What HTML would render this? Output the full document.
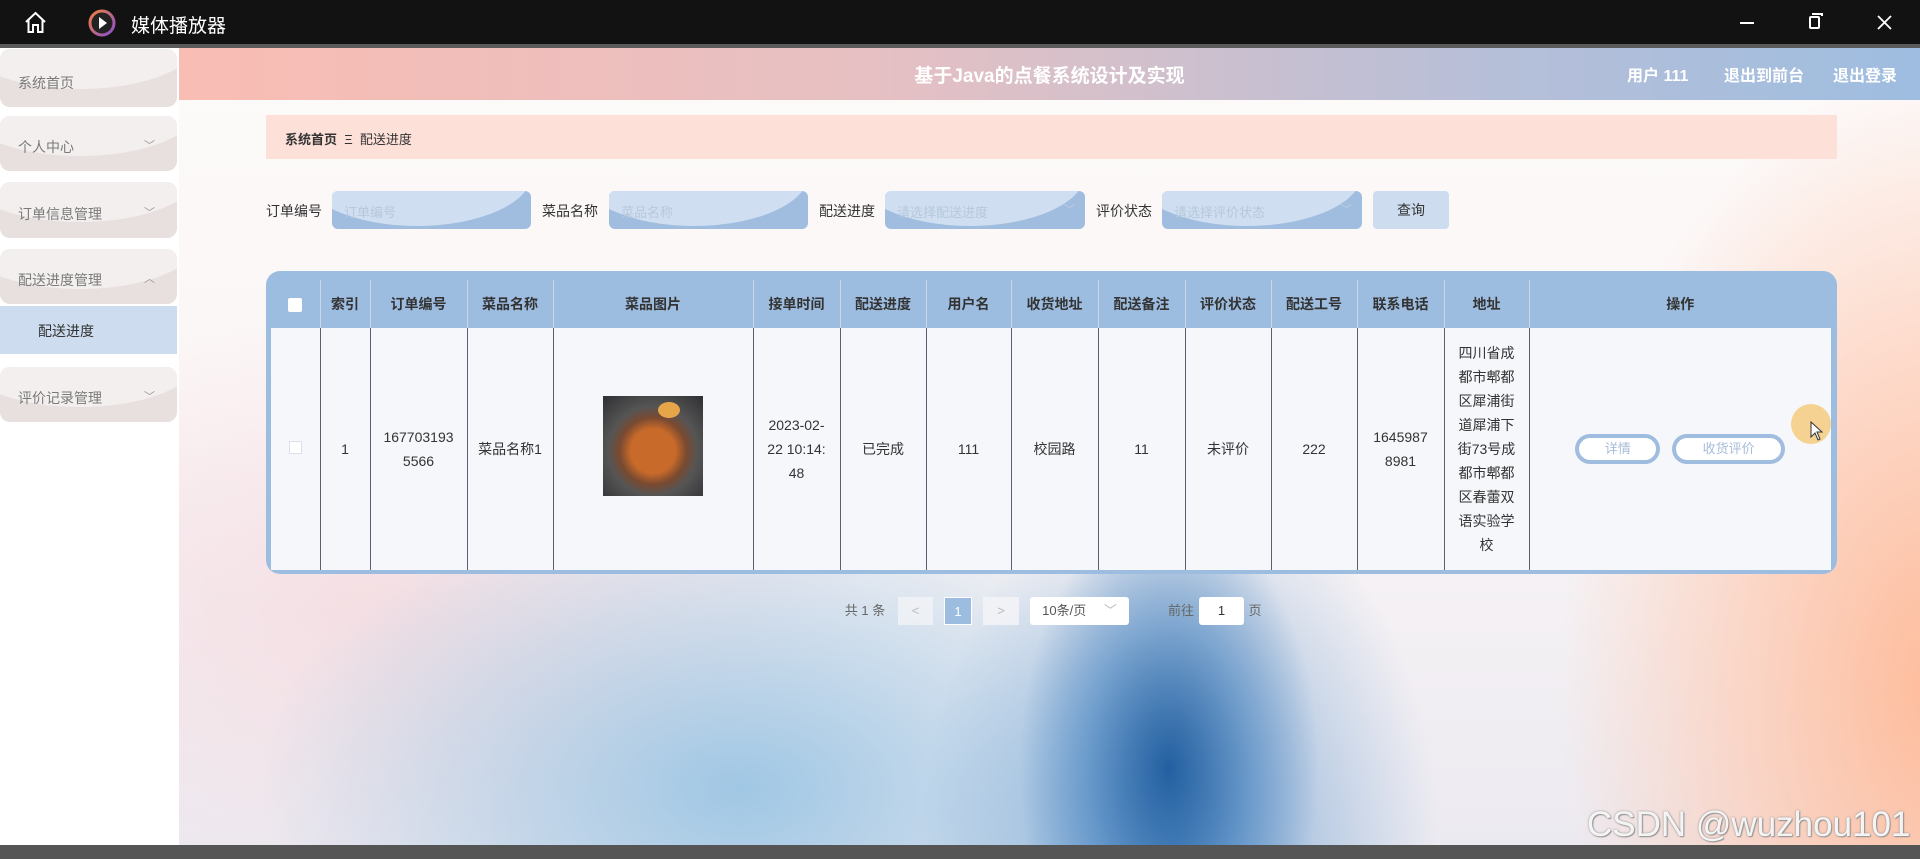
<!DOCTYPE html>
<html><head><meta charset="utf-8">
<style>
*{box-sizing:border-box;margin:0;padding:0}
body{width:1920px;height:859px;overflow:hidden;font-family:"Liberation Sans","Noto Sans CJK SC",sans-serif;background:#fff;position:relative}
.tb{position:absolute;left:0;top:0;width:1920px;height:44px;background:#121212;color:#fff}
.tb .t{position:absolute;left:131px;top:11px;font-size:19px}
.gl{position:absolute;left:0;top:44px;width:1920px;height:4px;background:#5a5a5a}
.side{position:absolute;left:0;top:48px;width:179px;height:797px;background:#fff}
.it{position:absolute;left:0;width:177px;border-radius:10px;background:#e8e0df;overflow:hidden;color:#7a7a7a;font-size:14px}
.it:before{content:"";position:absolute;left:-40px;top:-60px;width:240px;height:100px;border-radius:50%;background:#f3efee}
.it span{position:absolute;left:18px;bottom:14px}
.it i{position:absolute;right:22px;bottom:18px;font-style:normal;font-size:11px;color:#999}
.sub{position:absolute;left:0;top:306px;width:177px;height:48px;background:#cddcef;color:#333;font-size:14px;padding:15px 0 0 38px}
.main{position:absolute;left:179px;top:48px;width:1741px;height:797px;overflow:hidden;
background:
radial-gradient(ellipse 150px 260px at 990px 720px,rgba(15,80,150,.85),rgba(40,110,180,.45) 55%,transparent 100%),
radial-gradient(ellipse 260px 380px at 1000px 800px,rgba(60,130,195,.6),transparent 100%),
radial-gradient(ellipse 480px 300px at 560px 740px,rgba(140,190,225,.8),transparent 100%),
radial-gradient(ellipse 380px 620px at 1760px 640px,rgba(255,185,150,.95),rgba(255,200,175,.6) 55%,transparent 100%),
radial-gradient(ellipse 500px 300px at 200px 560px,rgba(245,215,220,.7),transparent 100%),
linear-gradient(180deg,#fdfafa 0%,#fbf6f6 45%,#eceaf1 100%)}
.hd{position:absolute;left:0;top:0;width:1741px;height:52px;background:linear-gradient(90deg,#f9bdb3,#e6c0c3 40%,#b7bfd8 75%,#9ebde0);color:#fff;font-weight:bold}
.hd .c{position:absolute;left:0;width:1741px;text-align:center;top:13px;font-size:19px}
.hd .r{position:absolute;top:14px;font-size:16px}
.bc{position:absolute;left:87px;top:67px;width:1571px;height:44px;background:#fde0d8;font-size:13px;color:#333;padding:14px 0 0 19px}
.lab{position:absolute;top:153px;font-size:14px;color:#333}
.inp{position:absolute;top:143px;height:38px;border-radius:6px;overflow:hidden;background:#a0bde0;color:#b8c8dc;font-size:13px}
.inp:before{content:"";position:absolute;left:-30px;top:-70px;width:230px;height:105px;border-radius:50%;background:#cfdff1}
.inp span{position:absolute;left:12px;top:11px}
.inp i{position:absolute;right:10px;top:10px;font-style:normal;color:#c0cfe0;font-size:11px}
.btn{position:absolute;left:1194px;top:143px;width:76px;height:38px;border-radius:4px;background:#cddcef;font-size:14px;color:#333;text-align:center;line-height:38px}
.tbl{position:absolute;left:87px;top:223px;width:1571px;height:303px;border-radius:14px;background:#9dbde0;padding:9px 6px 4px 5px}
table{border-collapse:collapse;width:1560px;height:290px;table-layout:fixed;font-size:14px;color:#333;text-align:center}
th{background:#9dbde0;height:48px;font-weight:bold;border-left:1px solid #c8d7ea}
td{background:#f6f7fb;border-left:1px solid #5a6070;line-height:24px;vertical-align:middle}
th:first-child,td:first-child{border-left:none}
.ob{display:inline-block;height:30px;border:4px solid #a0bde0;border-radius:15px;color:#a8bcd8;font-size:13px;line-height:22px;background:#fff}
.pg{position:absolute;top:549px;font-size:13px;color:#666;height:28px;line-height:28px;text-align:center}
.bot{position:absolute;left:0;top:845px;width:1920px;height:14px;background:#555}
.wm{position:absolute;left:1587px;top:805px;font-size:35px;color:rgba(255,255,255,.9);text-shadow:0 0 2px #888,1px 1px 1px #999}
</style></head><body>
<div class="tb">
<svg style="position:absolute;left:24px;top:11px" width="23" height="23" viewBox="0 0 23 23" fill="none" stroke="#fff" stroke-width="2"><path d="M2 11 L11.5 2 L21 11 M4.5 9 V21 H9 V14 H14 V21 H18.5 V9"/></svg>
<svg style="position:absolute;left:88px;top:9px" width="28" height="28" viewBox="0 0 28 28"><defs><linearGradient id="g" x1="0" y1="0" x2="1" y2="1"><stop offset="0" stop-color="#f0803a"/><stop offset="1" stop-color="#8a4fd0"/></linearGradient></defs><circle cx="14" cy="14" r="12" fill="#222" stroke="url(#g)" stroke-width="3"/><path d="M11 8 L19 14 L11 20Z" fill="#fff"/></svg>
<div class="t">媒体播放器</div>
<div style="position:absolute;left:1740px;top:22px;width:14px;height:2px;background:#fff"></div>
<div style="position:absolute;left:1809px;top:16px;width:11px;height:13px;border:2px solid #fff;border-radius:2px"></div>
<div style="position:absolute;left:1812px;top:13px;width:11px;height:3px;border-top:2px solid #fff;border-right:2px solid #fff"></div>
<svg style="position:absolute;left:1877px;top:15px" width="15" height="15" viewBox="0 0 15 15" stroke="#fff" stroke-width="1.8"><path d="M1 1L14 14M14 1L1 14"/></svg>
</div>
<div class="gl"></div>
<div class="side">
<div class="it" style="top:1px;height:58px"><span>系统首页</span></div>
<div class="it" style="top:68px;height:55px"><span>个人中心</span><i>﹀</i></div>
<div class="it" style="top:134px;height:56px"><span>订单信息管理</span><i>﹀</i></div>
<div class="it" style="top:201px;height:55px"><span>配送进度管理</span><i>︿</i></div>
<div class="sub" style="top:258px">配送进度</div>
<div class="it" style="top:319px;height:55px"><span>评价记录管理</span><i>﹀</i></div>
</div>
<div class="main">
<div class="hd"><div class="c">基于Java的点餐系统设计及实现</div>
<div class="r" style="left:1448px">用户 111</div><div class="r" style="left:1545px">退出到前台</div><div class="r" style="left:1654px">退出登录</div></div>
<div class="bc"><b>系统首页</b>&nbsp;&nbsp;Ξ&nbsp;&nbsp;配送进度</div>
<div class="lab" style="left:87px">订单编号</div>
<div class="inp" style="left:153px;width:199px"><span>订单编号</span></div>
<div class="lab" style="left:363px">菜品名称</div>
<div class="inp" style="left:430px;width:199px"><span>菜品名称</span></div>
<div class="lab" style="left:640px">配送进度</div>
<div class="inp" style="left:706px;width:200px"><span>请选择配送进度</span><i>﹀</i></div>
<div class="lab" style="left:917px">评价状态</div>
<div class="inp" style="left:983px;width:200px"><span>请选择评价状态</span><i>﹀</i></div>
<div class="btn">查询</div>
<div class="tbl"><table>
<colgroup><col style="width:49px"><col style="width:50px"><col style="width:97px"><col style="width:86px"><col style="width:200px"><col style="width:87px"><col style="width:86px"><col style="width:85px"><col style="width:87px"><col style="width:87px"><col style="width:86px"><col style="width:86px"><col style="width:87px"><col style="width:85px"><col></colgroup>
<tr><th><span style="display:inline-block;width:14px;height:14px;background:#fff;border-radius:2px;vertical-align:middle"></span></th><th>索引</th><th>订单编号</th><th>菜品名称</th><th>菜品图片</th><th>接单时间</th><th>配送进度</th><th>用户名</th><th>收货地址</th><th>配送备注</th><th>评价状态</th><th>配送工号</th><th>联系电话</th><th>地址</th><th>操作</th></tr>
<tr><td><span style="display:inline-block;width:13px;height:13px;border:1px solid #dde;background:#fff"></span></td><td>1</td><td>167703193<br>5566</td><td>菜品名称1</td>
<td><div style="display:inline-block;width:100px;height:100px;background:radial-gradient(circle at 50% 55%,#c86a2a 0 30%,#7a4a30 45%,#555 60%,#2f2f33 100%);position:relative"><div style="position:absolute;left:55px;top:6px;width:22px;height:16px;border-radius:50%;background:#e7a54a"></div></div></td>
<td>2023-02-<br>22 10:14:<br>48</td><td>已完成</td><td>111</td><td>校园路</td><td>11</td><td>未评价</td><td>222</td><td>1645987<br>8981</td>
<td>四川省成<br>都市郫都<br>区犀浦街<br>道犀浦下<br>街73号成<br>都市郫都<br>区春蕾双<br>语实验学<br>校</td>
<td><span class="ob" style="width:85px">详情</span>&nbsp;&nbsp;&nbsp;<span class="ob" style="width:113px">收货评价</span></td></tr>
</table></div>
<div style="position:absolute;left:1612px;top:356px;width:40px;height:40px;border-radius:50%;background:rgba(245,200,120,.8)"></div>
<svg style="position:absolute;left:1631px;top:373px" width="14" height="20" viewBox="0 0 14 20"><path d="M1 1 V16 L5 12 L8 19 L10 18 L7 11 H12Z" fill="#fff" stroke="#333" stroke-width="1"/></svg>
<div class="pg" style="left:661px;width:50px">共 1 条</div>
<div class="pg" style="left:719px;width:35px;background:rgba(245,245,247,.7);color:#bbb">&lt;</div>
<div class="pg" style="left:765px;width:28px;background:#9dbde0;color:#fff;border:1px solid #fff">1</div>
<div class="pg" style="left:804px;width:36px;background:rgba(245,245,247,.8);color:#bbb">&gt;</div>
<div class="pg" style="left:851px;width:99px;background:#fff;border-radius:3px;color:#555">10条/页 <span style="color:#bbb;margin-left:14px">﹀</span></div>
<div class="pg" style="left:982px;width:40px">前往</div>
<div class="pg" style="left:1020px;width:45px;background:#fff;border-radius:3px;color:#333">1</div>
<div class="pg" style="left:1066px;width:20px">页</div>
</div>
<div class="bot"></div>
<div class="wm">CSDN @wuzhou101</div>
</body></html>
